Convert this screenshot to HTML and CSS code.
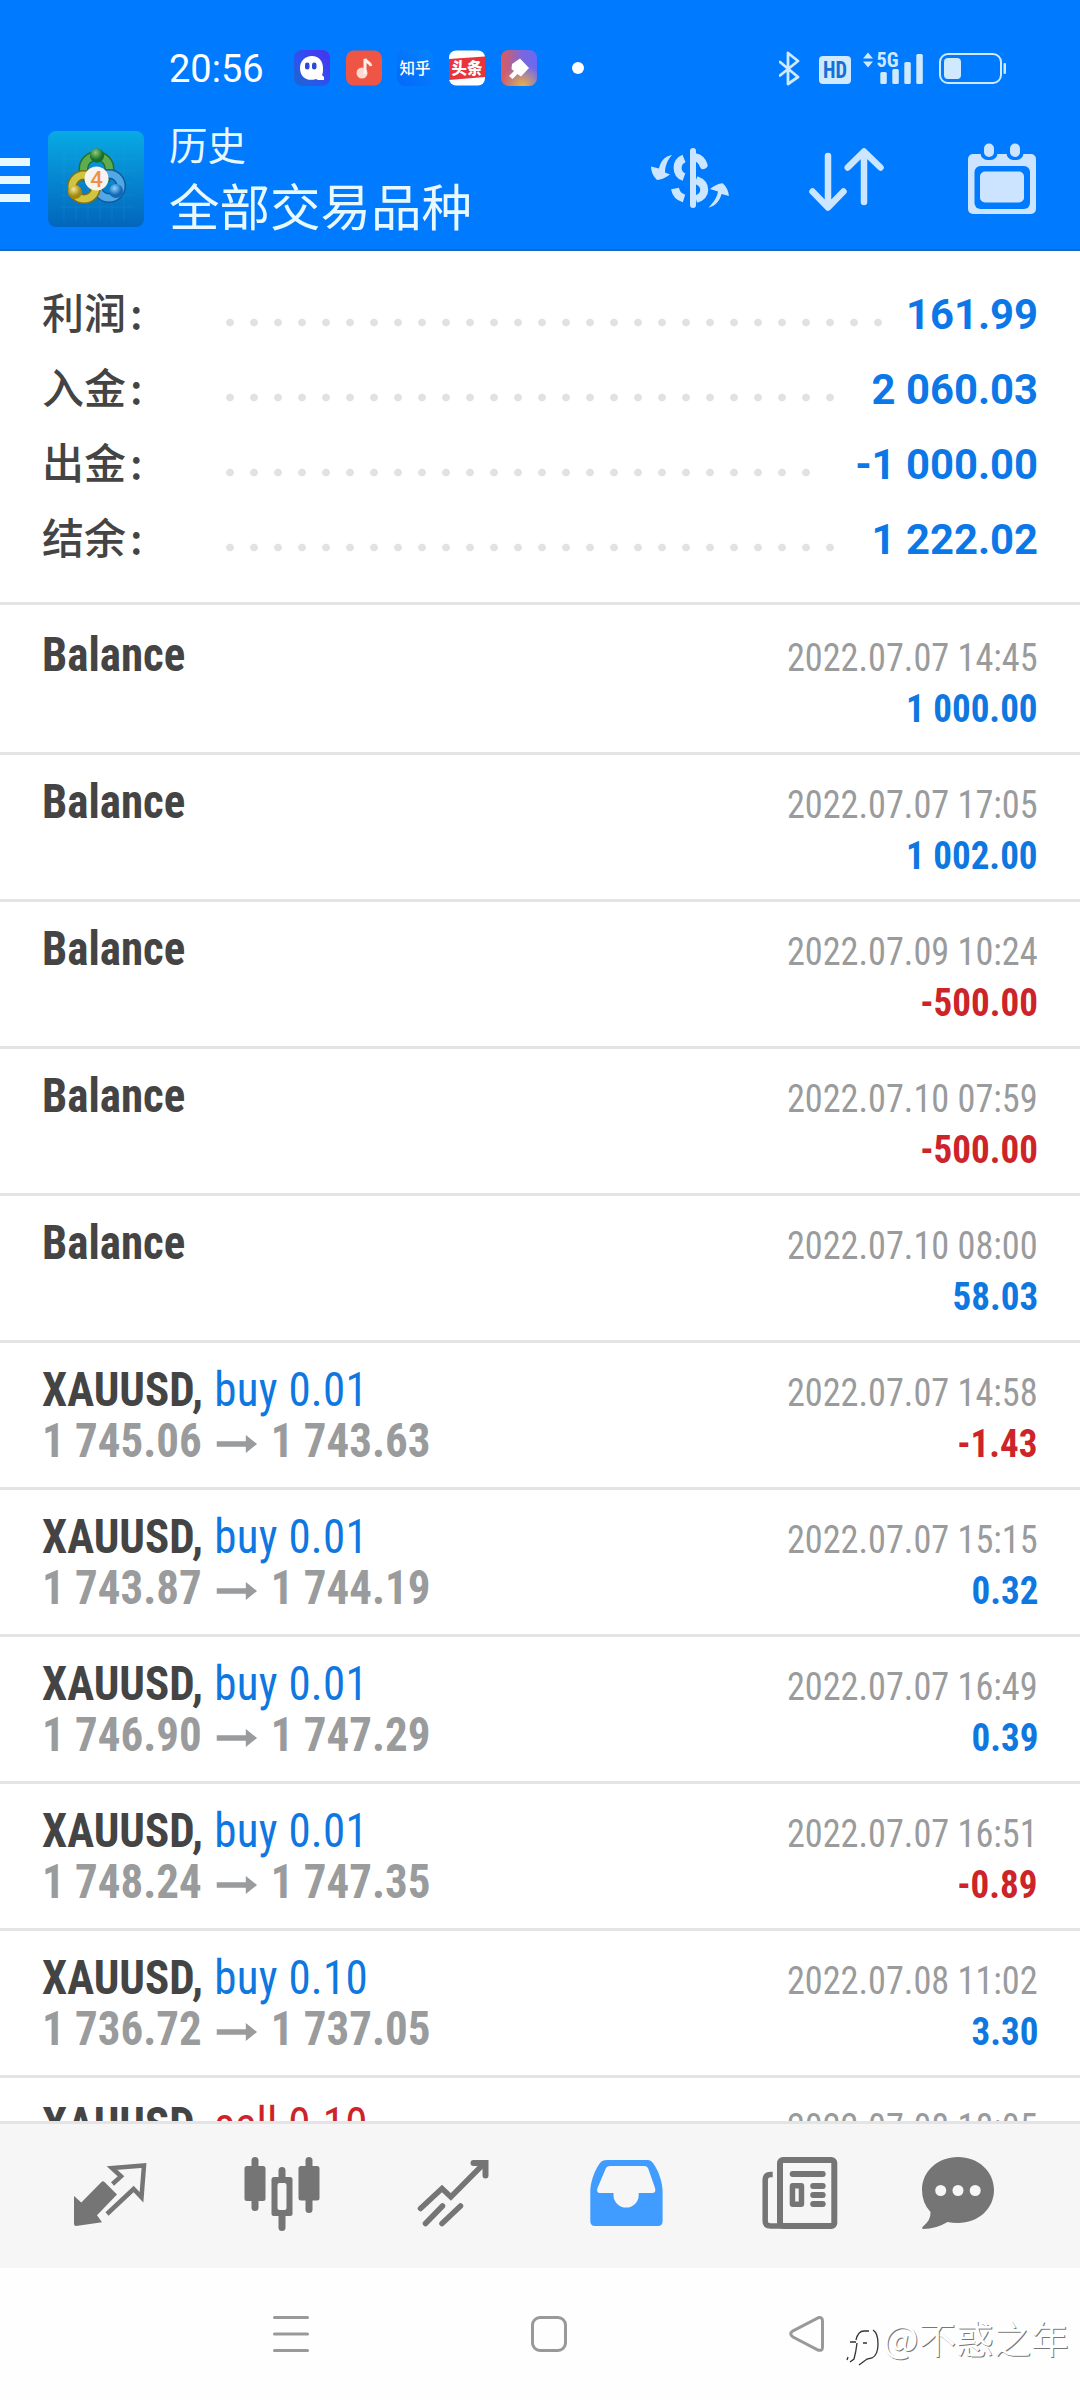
FILE: index.html
```html
<!DOCTYPE html>
<html lang="zh-CN">
<head>
<meta charset="utf-8">
<title>历史</title>
<link rel="stylesheet" href="styles.css">
</head>
<body>
<div class="screen">
  <header class="header">
    <div class="status">
      <span class="clock">20:56</span>
      <div class="notices">
        <svg width="36" height="36" viewBox="0 0 36 36"><defs><linearGradient id="gq" x1="0" y1="1" x2="1" y2="0"><stop offset="0" stop-color="#1a68c8"/><stop offset=".4" stop-color="#2c55ee"/><stop offset="1" stop-color="#4a30f0"/></linearGradient></defs><rect width="36" height="36" rx="8" fill="url(#gq)"/><path d="M18 6c7 0 11 5 11 12 0 3 0 5-1 7l2 2v3h-6l-2-1c-9 3-16-2-16-11 0-7 5-12 12-12z" fill="#fff"/><rect x="11" y="12.500" width="4.500" height="7" rx="2.200" fill="#3048d8"/><rect x="18" y="12.500" width="4.500" height="7" rx="2.200" fill="#3048d8"/></svg>
        <svg width="36" height="36" viewBox="0 0 36 36"><rect y=".5" width="36" height="35" rx="8" fill="#ee5545"/><circle cx="16" cy="23" r="5.500" fill="#ffd9d0"/><path d="M19 24V9c1 3 5 3 6 7" fill="none" stroke="#fff0ec" stroke-width="3"/></svg>
        <svg width="36" height="36" viewBox="0 0 36 36"><defs><linearGradient id="gz" x1="0" y1="1" x2="1" y2="0"><stop offset="0" stop-color="#0468fa"/><stop offset="1" stop-color="#0484fc"/></linearGradient></defs><rect width="36" height="36" rx="8" fill="url(#gz)"/><text x="18" y="23.500" text-anchor="middle" font-size="15.500" font-weight="500" class="cjk" fill="#fff">知乎</text></svg>
        <svg width="36" height="36" viewBox="0 0 36 36"><rect y=".5" width="36" height="35" rx="7" fill="#fff"/><path d="M0 9L36 6.500V27L0 30z" fill="#e8343c"/><text x="18" y="24" text-anchor="middle" font-size="15.500" font-weight="900" class="cjk" fill="#fff">头条</text></svg>
        <svg width="36" height="36" viewBox="0 0 36 36"><defs><linearGradient id="gp" x1="0" y1="0" x2="1" y2="0"><stop offset="0" stop-color="#e05a58"/><stop offset=".6" stop-color="#7868e0"/><stop offset="1" stop-color="#6a68f4"/></linearGradient><radialGradient id="gy" cx=".6" cy="1" r=".6"><stop offset="0" stop-color="#eeb040"/><stop offset="1" stop-color="#eeb040" stop-opacity="0"/></radialGradient></defs><rect width="36" height="36" rx="8" fill="url(#gp)"/><rect width="36" height="36" rx="8" fill="url(#gy)"/><path d="M11 14L19 8.500 28 18 20 26.500 16.500 24 11.500 29 8 26l5-5-2.500-2z" fill="#fff"/></svg>
      </div>
      <span class="more-dot"></span>
      <svg class="signals" width="230" height="36" viewBox="0 0 230 36" fill="#cfe9ff">
        <path d="M1 12L19 27 9 34V3L19 11 1 25.500" fill="none" stroke="#cfe9ff" stroke-width="2.800" stroke-linejoin="round" stroke-linecap="round"/>
        <rect x="40" y="6" width="32" height="28" rx="4"/>
        <text x="56" y="28" text-anchor="middle" font-size="23" font-weight="700" class="cond" fill="#1470d8" textLength="24" lengthAdjust="spacingAndGlyphs">HD</text>
        <path d="M84 8.500L89 2.500 94 8.500zM84 11.500L89 17.500 94 11.500z"/>
        <text x="97.500" y="17" font-size="20" font-weight="700" class="cond" textLength="22" lengthAdjust="spacingAndGlyphs">5G</text>
        <rect x="101.300" y="22" width="6.500" height="12" rx="1.500"/><rect x="113.300" y="19" width="6.500" height="15" rx="1.500"/><rect x="125.300" y="12" width="6.500" height="22" rx="1.500"/><rect x="137.300" y="4" width="6.500" height="30" rx="1.500"/>
        <rect x="161" y="4" width="61" height="29" rx="8" fill="none" stroke="#cfe9ff" stroke-width="2"/><rect x="165" y="8" width="17" height="21" rx="4"/><rect x="224.500" y="13" width="2.500" height="11" rx="1"/>
      </svg>
    </div>
    <div class="toolbar">
      <svg class="menu" width="30" height="44" viewBox="0 0 30 44" fill="#e8f8ff"><path d="M0 0H30V8H0zM0 18H30V26H0zM0 36H30V44H0z"/></svg>
      <svg class="logo" width="96" height="96" viewBox="0 0 96 96">
        <defs><linearGradient id="bg" x1="0" y1="0" x2="0" y2="1"><stop offset="0" stop-color="#08aae4"/><stop offset=".5" stop-color="#0686d0"/><stop offset="1" stop-color="#0266bc"/></linearGradient>
        <radialGradient id="g1" cx=".4" cy=".3"><stop offset="0" stop-color="#8acc80"/><stop offset="1" stop-color="#187028"/></radialGradient><radialGradient id="g2" cx=".4" cy=".3"><stop offset="0" stop-color="#f4e890"/><stop offset="1" stop-color="#a08810"/></radialGradient><radialGradient id="g3" cx=".4" cy=".3"><stop offset="0" stop-color="#90d4ff"/><stop offset="1" stop-color="#1068b8"/></radialGradient></defs>
        <rect width="96" height="96" rx="8" fill="url(#bg)"/>
        <path d="M16 16V90M28 16V90M40 16V90M52 16V90M64 16V90M76 16V90M12 28H86M12 40H86M12 52H86M12 64H86M12 76H86" stroke="#38b0e8" stroke-opacity=".16"/>
        <circle cx="48.500" cy="38" r="13" fill="none" stroke="#286c28" stroke-width="10"/><circle cx="48.500" cy="38" r="13" fill="none" stroke="#5cac50" stroke-width="7"/>
        <circle cx="61" cy="55" r="12" fill="none" stroke="#14589c" stroke-width="10"/><circle cx="61" cy="55" r="12" fill="none" stroke="#50a8e4" stroke-width="7"/>
        <circle cx="36" cy="56" r="12" fill="none" stroke="#807010" stroke-width="10"/><circle cx="36" cy="56" r="12" fill="none" stroke="#d0c440" stroke-width="7"/>
        <circle cx="49" cy="24.500" r="7.200" fill="url(#g1)"/><circle cx="27" cy="61" r="7" fill="url(#g2)"/><circle cx="68" cy="60" r="7" fill="url(#g3)"/>
        <circle cx="48.500" cy="47.500" r="12" fill="#f6f4f0"/><text x="48.500" y="55.500" text-anchor="middle" font-size="22" class="roboto" font-weight="500" fill="#f09040">4</text>
      </svg>
      <div class="titles"><span class="sub">历史</span><span class="main">全部交易品种</span></div>
      <svg class="act-money" width="80" height="66" viewBox="0 0 80 66" fill="#cce6ff">
        <rect x="40" y="2" width="6" height="60" rx="3"/>
        <g fill="none" stroke="#cce6ff" stroke-width="8"><path d="M34 12.500C25.500 16 25.500 28 34 31"/><path d="M46 11.500C50 12.500 52 15 53.500 19" stroke-linecap="round"/><path d="M46 34C57 38 57 50 46 53"/><path d="M25 42.500C26 48 29 51 34 52.500"/></g>
        <path d="M22 9C14 10 10 17 9 22.500L1 20.500Q1 28 7 34 13 33.500 20 28.500L15 26.500C15 20 18 13 22 9zM58.300 61.700C66 60 70 54 71.500 48L79 50Q78 42 72.700 37.300 66 38 60 43L68 45.500C67 52 63 57 58.300 61.700z"/>
      </svg>
      <svg class="act-sort" width="75" height="66" viewBox="0 0 75 66" fill="none" stroke="#cce6ff" stroke-width="6.500" stroke-linecap="round" stroke-linejoin="round"><path d="M19 10V61M3.500 45.500L19 61.500 34.500 45.500M55 56V6M38.700 21.500L55 5.500 71.500 21.500"/></svg>
      <svg class="act-date" width="68" height="72" viewBox="0 0 68 72"><rect y="11" width="68" height="60" rx="5" fill="#cce4ff"/><rect x="6.500" y="23" width="55.500" height="43" rx="6" fill="#007aff"/><rect x="12" y="28.500" width="44" height="31" rx="5" fill="#cce4ff"/><rect x="12.500" y="-4" width="17" height="21" rx="7" fill="#007aff"/><rect x="38.500" y="-4" width="17" height="21" rx="7" fill="#007aff"/><rect x="16" y=".5" width="10" height="13.500" rx="5" fill="#cce4ff"/><rect x="42" y=".5" width="10" height="13.500" rx="5" fill="#cce4ff"/></svg>
    </div>
  </header>

  <section class="summary">
    <div class="sum"><span class="label">利润<i class="colon">:</i></span><i class="leader" style="--n:28"></i><b>161.99</b></div>
    <div class="sum"><span class="label">入金<i class="colon">:</i></span><i class="leader" style="--n:26"></i><b>2 060.03</b></div>
    <div class="sum"><span class="label">出金<i class="colon">:</i></span><i class="leader" style="--n:25"></i><b>-1 000.00</b></div>
    <div class="sum"><span class="label">结余<i class="colon">:</i></span><i class="leader" style="--n:26"></i><b>1 222.02</b></div>
  </section>

  <svg width="0" height="0" class="defs"><symbol id="to" viewBox="0 0 43 18"><path d="M0 6.200H31V0L43 9 31 18V11.800H0z" fill="#999b9c"/></symbol></svg>

  <main class="list">
    <div class="row"><div class="line"><b class="name">Balance</b><span class="date">2022.07.07 14:45</span></div><div class="line"><b class="amt">1 000.00</b></div></div>
    <div class="row"><div class="line"><b class="name">Balance</b><span class="date">2022.07.07 17:05</span></div><div class="line"><b class="amt">1 002.00</b></div></div>
    <div class="row"><div class="line"><b class="name">Balance</b><span class="date">2022.07.09 10:24</span></div><div class="line"><b class="amt neg">-500.00</b></div></div>
    <div class="row"><div class="line"><b class="name">Balance</b><span class="date">2022.07.10 07:59</span></div><div class="line"><b class="amt neg">-500.00</b></div></div>
    <div class="row"><div class="line"><b class="name">Balance</b><span class="date">2022.07.10 08:00</span></div><div class="line"><b class="amt">58.03</b></div></div>
    <div class="row"><div class="line"><span class="name"><b>XAUUSD,</b> <span class="side">buy 0.01</span></span><span class="date">2022.07.07 14:58</span></div><div class="line"><b class="price">1 745.06<svg class="to"><use href="#to"/></svg>1 743.63</b><b class="amt neg">-1.43</b></div></div>
    <div class="row"><div class="line"><span class="name"><b>XAUUSD,</b> <span class="side">buy 0.01</span></span><span class="date">2022.07.07 15:15</span></div><div class="line"><b class="price">1 743.87<svg class="to"><use href="#to"/></svg>1 744.19</b><b class="amt">0.32</b></div></div>
    <div class="row"><div class="line"><span class="name"><b>XAUUSD,</b> <span class="side">buy 0.01</span></span><span class="date">2022.07.07 16:49</span></div><div class="line"><b class="price">1 746.90<svg class="to"><use href="#to"/></svg>1 747.29</b><b class="amt">0.39</b></div></div>
    <div class="row"><div class="line"><span class="name"><b>XAUUSD,</b> <span class="side">buy 0.01</span></span><span class="date">2022.07.07 16:51</span></div><div class="line"><b class="price">1 748.24<svg class="to"><use href="#to"/></svg>1 747.35</b><b class="amt neg">-0.89</b></div></div>
    <div class="row"><div class="line"><span class="name"><b>XAUUSD,</b> <span class="side">buy 0.10</span></span><span class="date">2022.07.08 11:02</span></div><div class="line"><b class="price">1 736.72<svg class="to"><use href="#to"/></svg>1 737.05</b><b class="amt">3.30</b></div></div>
    <div class="row"><div class="line"><span class="name"><b>XAUUSD,</b> <span class="side neg">sell 0.10</span></span><span class="date">2022.07.08 18:05</span></div></div>
  </main>

  <nav class="tabs">
    <svg viewBox="69 2152 80 80"><path d="M74 2196L81.300 2202.500 101.500 2182Q103 2180.500 104.500 2182L117 2194.500 97 2215.300 102 2222.300 76 2226Q74 2226 74 2224z" fill="#757575"/><path d="M112.500 2184L121 2176.300 112 2168 144 2165.500 141.500 2197.300 133.600 2189 107 2214" fill="none" stroke="#757575" stroke-width="4.500"/></svg>
    <svg viewBox="241.500 2152 80 80" fill="#757575"><rect x="251" y="2157" width="7" height="54" rx="3.500"/><rect x="244" y="2166" width="21" height="35" rx="2.500"/><rect x="305" y="2157" width="7" height="56" rx="3.500"/><rect x="298" y="2166" width="21" height="34.500" rx="2.500"/><rect x="278" y="2167" width="7" height="64" rx="3.500"/><rect x="271" y="2177" width="21" height="39" rx="2.500"/><rect x="277" y="2183" width="9" height="27" rx="2" fill="#f6f6f6"/></svg>
    <svg viewBox="414.500 2152 80 80" fill="none" stroke="#757575" stroke-width="5.500" stroke-linecap="round"><path d="M421 2208.500L442.500 2188.500 451.400 2197 484 2164"/><path d="M474 2163H486V2175.500" stroke-width="6"/><path d="M426 2223.500L443 2206M442.500 2223.500L461 2206"/></svg>
    <svg viewBox="587 2152 80 80"><path d="M607 2160H648Q651 2160 653 2163C659 2171 662.600 2183 662.600 2192V2221Q662.600 2226 658 2226H595Q590.300 2226 590.300 2221V2192C590.300 2183 594 2171 600 2163Q602 2160 607 2160zM610 2166Q607 2166 606 2168L597.500 2188Q596 2193 600 2193H613.500V2195A12.600 12.600 0 0 0 638.700 2195V2193H652Q656.500 2193 655 2188L648 2168Q647 2166 644 2166z" fill="#409cff" fill-rule="evenodd"/></svg>
    <svg viewBox="759.300 2152 80 80" fill="#757575"><rect x="780.300" y="2160" width="54.300" height="66" rx="3" fill="none" stroke="#757575" stroke-width="6"/><path d="M773 2174.500H771Q765.500 2174.500 765.500 2180V2221Q765.500 2226 771 2226H782" fill="none" stroke="#757575" stroke-width="5.500"/><rect x="790" y="2171" width="36" height="6" rx="3"/><path d="M793 2183H801.500Q804.500 2183 804.500 2186V2204Q804.500 2207 801.500 2207H793Q790 2207 790 2204V2186Q790 2183 793 2183zM795.500 2188.500V2201.500H799V2188.500z" fill-rule="evenodd"/><rect x="810.500" y="2183" width="15.500" height="6" rx="3"/><rect x="810.500" y="2192" width="15.500" height="6" rx="3"/><rect x="810.500" y="2201" width="15.500" height="6" rx="3"/></svg>
    <svg class="chat" viewBox="918 2152 80 80"><path d="M958 2157C978 2157 994 2171 994 2190S978 2223 958 2223Q952 2223 947.500 2222 936 2229 923.500 2229 921 2229 923 2226.500 931 2220 930.500 2212 922 2203 922 2190C922 2171 938 2157 958 2157z" fill="#757575"/><g fill="#f6f6f6"><circle cx="940.700" cy="2190.500" r="5.500"/><circle cx="958" cy="2190.500" r="5.500"/><circle cx="975.200" cy="2190.500" r="5.500"/></g></svg>
  </nav>

  <footer class="sysnav">
    <svg width="36" height="36" viewBox="0 0 36 36" stroke="#999" stroke-width="3" stroke-linecap="round"><path d="M1.500 1.500H34.500M1.500 18H34.500M1.500 34.500H34.500"/></svg>
    <svg width="36" height="36" viewBox="0 0 36 36" fill="none" stroke="#999" stroke-width="3"><rect x="1.500" y="1.500" width="33" height="33" rx="7.500"/></svg>
    <svg width="36" height="36" viewBox="0 0 36 36" fill="none" stroke="#999" stroke-width="3"><path d="M4 14.800L29 1.800Q33.500 .5 33.500 5V31Q33.500 35.500 29 34L4 21Q-.5 18 4 14.800z"/></svg>
    <div class="mark">
      <svg width="36" height="42" viewBox="0 0 36 42" fill="none"><g stroke="#333" stroke-width="1.300"><path d="M11 14Q13 5 19 5H24M5 16H11M18 17H22M28 4Q33 7 33 18T27 32L22 33 14 39M12 17Q11 26 9 33L5 36M3 31L2 34"/></g></svg>
      <span>@不惑之年</span>
    </div>
  </footer>
</div>
</body>
</html>
```
FILE: styles.css
```css
* { box-sizing: border-box; }
body { margin: 0; background: #fff; font-family: Roboto, "Noto Sans CJK SC", sans-serif; }
svg { display: block; flex: none; }
.cjk { font-family: "Noto Sans CJK SC", sans-serif; }
.cond { font-family: "Roboto Condensed", Roboto, sans-serif; }
.roboto { font-family: Roboto, sans-serif; }
.defs { position: absolute; }
.screen { width: 1080px; height: 2400px; display: flex; flex-direction: column; overflow: hidden; }

.header { flex: none; height: 251px; background: #007aff; border-bottom: 2px solid #1868c0; color: #e8f8ff; }
.status { height: 110px; padding: 26px 71px 0 169px; display: flex; align-items: center; }
.clock { width: 125px; padding-top: 2px; font-size: 38px; line-height: 60px; font-weight: 450; color: #fff; }
.notices { display: flex; gap: 15.700px; }
.more-dot { width: 12px; height: 12px; margin-left: 35px; border-radius: 50%; background: #fff; }
.signals { margin-left: auto; }
.toolbar { height: 137px; display: flex; align-items: center; padding-right: 44px; }
.menu { margin-top: 3px; }
.logo { margin-left: 18px; }
.titles { margin: -6px auto 0 25px; display: flex; flex-direction: column; font-family: "Noto Sans CJK SC", sans-serif; font-weight: 400; white-space: nowrap; }
.sub { font-size: 38.500px; line-height: 56px; }
.main { font-size: 50.500px; line-height: 66px; }
.act-sort { margin-left: 79px; }
.act-date { margin-left: 84px; }

.summary { flex: none; height: 354px; padding: 22px 42px 0; border-bottom: 3px solid #e4e4e4; }
.sum { height: 75px; display: flex; align-items: baseline; line-height: 75px; }
.label { width: 184px; font: 500 42px/75px "Noto Sans CJK SC", sans-serif; color: #444; }
.colon { margin-left: 4px; font-style: normal; }
.leader { align-self: stretch; width: calc(var(--n) * 24px); background: radial-gradient(circle at 4px 49.500px, #e2e2e2 3.500px, transparent 4.200px) 0 0 / 24px 75px repeat-x; }
.sum b { margin-left: auto; font-size: 41.800px; color: #0c78e8; }

.list { flex: none; height: 1516px; padding-top: 3px; overflow: hidden; font-family: "Roboto Condensed", Roboto, sans-serif; }
.list .row { height: 147px; padding: 21px 42px 0; border-bottom: 3px solid #e4e4e4; }
.line { height: 51px; display: flex; align-items: baseline; font-size: 48px; line-height: 51px; white-space: nowrap; }
.line::before { content: "\200b"; width: 0; }
.name, .price { color: #444; transform: scaleX(.937); transform-origin: 0 0; }
.side { margin-left: 1px; letter-spacing: .3px; color: #0f77e0; }
.date, .amt { margin-left: auto; font-size: 39px; transform: scaleX(.93); transform-origin: 100% 0; color: #999b9c; }
.amt { color: #0f77e0; transform: scaleX(.95); }
.neg { color: #cc2428; }
.price { color: #999b9c; }
.to { display: inline-block; width: 46px; height: 18px; margin: 0 13.500px 4px 14px; vertical-align: baseline; }

.tabs { flex: none; height: 147px; padding: 28px 0 0 69px; display: flex; gap: 92.500px; background: #f6f6f6; border-top: 3px solid #e4e4e4; }
.tabs svg { width: 80px; height: 80px; }
.tabs .chat { margin-left: -13.500px; }

.sysnav { position: relative; height: 132px; padding: 48px 0 0 273px; display: flex; gap: 222px; background: #fefefe; }
.mark { position: absolute; left: 845px; top: 38px; display: flex; align-items: center; font: 37.500px/50px "Noto Sans CJK SC", sans-serif; color: #fff; text-shadow: 1px 1px 0 #777; white-space: nowrap; }
.mark svg { margin: 20px 2px 0 0; }
```
